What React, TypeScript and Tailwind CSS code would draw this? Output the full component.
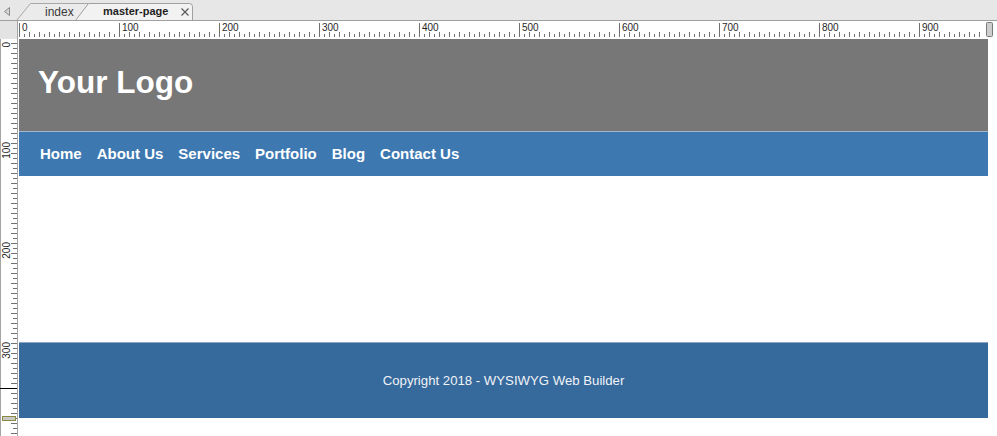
import type { ReactNode } from 'react';

const NAV_ITEMS = ['Home', 'About Us', 'Services', 'Portfolio', 'Blog', 'Contact Us'];

function TabBar() {
  return (
    <div className="relative h-[21px] bg-[#e7e7e7]">
      <svg className="absolute inset-0" width="997" height="21">
        {/* scroll-left arrow */}
        <path d="M9.5 7.5 L4.5 11.5 L9.5 15.5 Z" fill="#d4d4d4" stroke="#8c8c8c" />
        {/* inactive tab */}
        <path d="M16.5 20.5 L30.5 3.5 L88 3.5 L88 20.5 Z" fill="#ebebeb" stroke="#a8a8a8" />
        {/* active tab */}
        <path
          d="M75.5 20.5 L88.5 3.5 L189.5 3.5 Q192.5 3.5 192.5 6.5 L192.5 20.5 Z"
          fill="#f2f2f2"
          stroke="#a0a0a0"
        />
        <line x1="0" y1="20.5" x2="997" y2="20.5" stroke="#a0a0a0" />
        {/* close */}
        <path d="M181.5 8.5 L188.5 15.5 M188.5 8.5 L181.5 15.5" stroke="#5a5a5a" strokeWidth="1.2" />
      </svg>
      <div className="relative flex h-full items-center pt-[2px]">
        <span className="ml-[45px] w-[58px] text-[12px] leading-none text-[#3a3a3a]">index</span>
        <span className="text-[11px] font-bold leading-none text-[#1e1e1e]">master-page</span>
      </div>
    </div>
  );
}

function HorizontalRuler() {
  const ticks: ReactNode[] = [];
  const labels: ReactNode[] = [];
  for (let i = 0; i < 965; i += 5) {
    const x = i + 0.5;
    const y1 = i % 100 === 0 ? 2 : i % 10 === 0 ? 11 : 13;
    ticks.push(<line key={i} x1={x} y1={y1} x2={x} y2={16} stroke="#707070" />);
    if (i % 100 === 0) {
      labels.push(
        <text key={i} x={i + 3} y={9.5} fontSize="10" fill="#1f1f1f" fontFamily="Liberation Sans, Arial, sans-serif">
          {i}
        </text>,
      );
    }
  }
  return (
    <svg width="978" height="18" className="block">
      {ticks}
      {labels}
      <rect x="967.5" y="1.5" width="6" height="14" rx="1" fill="#cdcdcd" stroke="#7a7a7a" />
    </svg>
  );
}

function VerticalRuler() {
  const ticks: ReactNode[] = [];
  const labels: ReactNode[] = [];
  for (let k = 0; k * 5 + 4 < 397; k++) {
    const y = k * 5 + 4 + 0.5;
    const x1 = k % 2 === 0 ? 11 : 13;
    ticks.push(<line key={k} x1={x1} y1={y} x2={17} y2={y} stroke="#707070" />);
    if (k % 20 === 0) {
      const ty = k * 5 + 3;
      labels.push(
        <text
          key={k}
          x={10}
          y={ty}
          fontSize="10"
          fill="#1f1f1f"
          textAnchor="end"
          transform={`rotate(-90 10 ${ty})`}
          fontFamily="Liberation Sans, Arial, sans-serif"
        >
          {k * 5}
        </text>,
      );
    }
  }
  return (
    <svg width="19" height="397" className="block shrink-0">
      <line x1="0.5" y1="0" x2="0.5" y2="397" stroke="#a5a5a5" />
      <line x1="17.5" y1="0" x2="17.5" y2="397" stroke="#a5a5a5" />
      {ticks}
      {labels}
      {/* cursor marker */}
      <line x1="0" y1="349.5" x2="17" y2="349.5" stroke="#000" />
      <rect x="2.5" y="377.5" width="13" height="4" fill="#c8c8c8" stroke="#8a8a3c" />
    </svg>
  );
}

function Page() {
  return (
    <div className="flex w-[969px] shrink-0 flex-col">
      <header className="h-[92px] bg-[#777777] pl-[19px] pt-[28px]">
        <h1 className="text-[31.5px] font-bold leading-none text-white">Your Logo</h1>
      </header>
      <nav className="flex h-[45px] items-center border-t border-[#a3b8cf] bg-[#3d78b1] pl-[13.5px]">
        {NAV_ITEMS.map((item) => (
          <span key={item} className="px-[7.5px] text-[15px] font-bold text-white">
            {item}
          </span>
        ))}
      </nav>
      <main className="h-[166px] bg-white" />
      <footer className="flex h-[76px] items-center justify-center border-t border-[#8ca6c3] bg-[#36699c] text-[13.2px] text-[#f0f3f7]">
        Copyright 2018 - WYSIWYG Web Builder
      </footer>
    </div>
  );
}

export default function App() {
  return (
    <div className="h-[436px] w-[997px] overflow-hidden bg-white font-['Liberation_Sans',Arial,sans-serif]">
      <TabBar />
      <div className="flex h-[18px]">
        <div className="w-[19px] shrink-0 border-r-2 border-r-white">
          <div className="h-full w-[18px] border-r border-[#a5a5a5] bg-[#e3e3e3]" />
        </div>
        <HorizontalRuler />
      </div>
      <div className="flex">
        <VerticalRuler />
        <Page />
      </div>
    </div>
  );
}
